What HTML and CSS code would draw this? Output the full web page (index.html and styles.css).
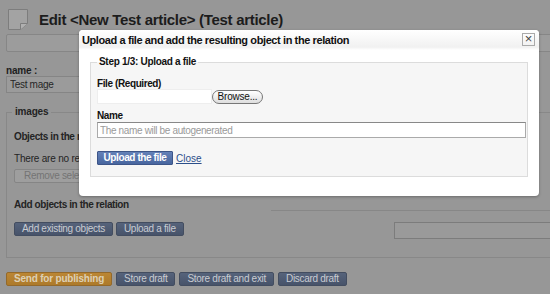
FILE: index.html
```html
<!DOCTYPE html>
<html lang="en">
<head>
  <meta charset="UTF-8" />
  <title>Edit article</title>
  <link rel="stylesheet" href="styles.css">
</head>
<body>
  <div class="page">
    <div class="head">
      <svg class="doc-icon" width="22" height="23" viewBox="0 0 22 23">
        <path d="M1.5 1.5 H20.5 V15.5 L13.5 21.5 H1.5 Z" fill="#a3a3a3" stroke="#7d7d7d" />
        <path d="M20.5 15.5 H13.5 V21.5" fill="#b0b0b0" stroke="#7d7d7d" />
      </svg>
      <h1>Edit &lt;New Test article&gt; (Test article)</h1>
    </div>

    <div class="toolbar"></div>

    <label class="field-label">name :</label>
    <input class="text-input" type="text" value="Test mage" />

    <fieldset class="relation">
      <legend>images</legend>
      <h3>Objects in the relation</h3>
      <p>There are no related objects.</p>
      <button class="btn btn-off">Remove selected</button>
      <h3 class="add-title">Add objects in the relation</h3>
      <div class="add-row">
        <button class="btn btn-blue">Add existing objects</button>
        <button class="btn btn-blue">Upload a file</button>
        <div class="search-block">
          <input class="search-input" type="text" />
        </div>
      </div>
    </fieldset>

    <div class="actions">
      <button class="btn btn-orange">Send for publishing</button>
      <button class="btn btn-blue">Store draft</button>
      <button class="btn btn-blue">Store draft and exit</button>
      <button class="btn btn-blue">Discard draft</button>
    </div>
  </div>

  <!-- fenêtre modale -->
  <div class="dialog">
    <div class="dialog-title">
      <span>Upload a file and add the resulting object in the relation</span>
      <span class="dialog-close">&#215;</span>
    </div>
    <fieldset class="step">
      <legend>Step 1/3: Upload a file</legend>
      <label class="step-label">File (Required)</label>
      <div class="file-row">
        <span class="file-box"></span>
        <button class="browse">Browse...</button>
      </div>
      <label class="step-label name-label">Name</label>
      <input class="name-input" type="text" placeholder="The name will be autogenerated" />
      <div class="step-actions">
        <button class="upload-btn">Upload the file</button>
        <a href="#" class="close-link">Close</a>
      </div>
    </fieldset>
  </div>
</body>
</html>
```

FILE: styles.css
```css
* {
  margin: 0; padding: 0; box-sizing: border-box;
}

html, body {
  width: 550px;
  height: 294px;
  overflow: hidden;
  background: #979797;
  font-family: "Liberation Sans", Arial, sans-serif;
  color: #1e1e1e;
}

.page {
  position: relative;
  width: 620px;
  padding: 8px 6px 0;
}

.head {
  display: flex;
  align-items: center;
  gap: 10px;
  height: 23px;
}

.doc-icon {
  margin-left: 1px;
  flex: none;
}

h1 {
  font-size: 15px;
  letter-spacing: -0.3px;
  font-weight: bold;
  color: #1c1c1c;
}

.toolbar {
  height: 18px;
  margin-top: 3px;
  border: 1px solid #868686;
  border-radius: 2px;
  background: #9c9c9c;
}

.field-label {
  display: block;
  margin-top: 13px;
  font-size: 10px;
  letter-spacing: -0.2px;
  font-weight: bold;
  line-height: 11px;
}

.text-input {
  display: block;
  width: 320px;
  height: 17px;
  padding: 0 3px;
  border: 1px solid #858585;
  background: #9b9b9b;
  font: 10px "Liberation Sans", Arial, sans-serif;
  letter-spacing: -0.3px;
  color: #262626;
}

.relation {
  margin-top: 13px;
  height: 152px;
  padding: 0 7px;
  border: 1px solid #888;
}

.relation legend {
  margin-left: -2px;
  padding: 0 3px;
  font-size: 10px;
  line-height: 12px;
  letter-spacing: -0.2px;
  font-weight: bold;
  color: #232323;
}

.relation h3 {
  margin-top: 13px;
  font-size: 10px;
  line-height: 12px;
  letter-spacing: -0.4px;
  font-weight: bold;
  color: #242424;
}

.relation p {
  margin-top: 10px;
  font-size: 10px;
  line-height: 12px;
  letter-spacing: -0.2px;
  color: #242424;
}

.relation h3.add-title {
  margin-top: 16px;
}

.btn {
  height: 14px;
  padding: 0 7px;
  border: 1px solid #6e6e6e;
  border-radius: 2px;
  font: 10px "Liberation Sans", Arial, sans-serif;
  line-height: 12px;
  letter-spacing: -0.3px;
  white-space: nowrap;
  flex: none;
  cursor: pointer;
}

.btn-off {
  display: block;
  margin-top: 4px;
  width: 140px;
  text-align: left;
  padding-left: 9px;
  background: #9e9e9e;
  border-color: #858585;
  color: #747474;
}

.btn-blue {
  background: linear-gradient(#56637b, #47536a);
  border-color: #434d60;
  color: #c9ccd2;
}

.btn-orange {
  background: linear-gradient(#bb8634, #ad7a2a);
  border-color: #94692a;
  color: #ddd0b6;
  font-weight: bold;
  letter-spacing: -0.2px;
}

.add-row {
  display: flex;
  align-items: flex-start;
  gap: 3px;
  margin-top: 11px;
}

.search-block {
  flex: none;
  width: 360px;
  margin-left: 84px;
  margin-top: -12px;
  padding: 11px 0 0 123px;
  border-top: 1px solid #878787;
}

.search-input {
  display: block;
  width: 240px;
  height: 17px;
  border: 1px solid #7c7c7c;
  background: #9a9a9a;
}

.actions {
  display: flex;
  gap: 4px;
  margin-top: 14px;
}

.dialog {
  position: absolute;
  left: 79px;
  top: 30px;
  width: 460px;
  height: 166px;
  background: #fff;
  border-radius: 4px;
  box-shadow: 0 1px 3px rgba(0, 0, 0, 0.3);
}

.dialog-title {
  display: flex;
  justify-content: space-between;
  align-items: center;
  height: 20px;
  padding: 0 4px 0 3px;
  border-radius: 4px 4px 0 0;
  background: linear-gradient(#fff, #f1f1f1 85%, #fff);
  font-size: 11px;
  letter-spacing: -0.4px;
  font-weight: bold;
  color: #111;
}

.dialog-close {
  width: 13px;
  height: 13px;
  margin-top: -2px;
  border: 1px solid #aaa;
  font-size: 13px;
  line-height: 10px;
  font-weight: normal;
  letter-spacing: 0;
  text-align: center;
  color: #444;
}

.step {
  margin: 6px 11px 0;
  height: 121px;
  padding: 0 0 0 6px;
  border: 1px solid #dcdcdc;
  background: #f6f6f6;
}

.step legend {
  margin-left: 0;
  padding: 0 2px;
  font-size: 10px;
  line-height: 12px;
  letter-spacing: -0.3px;
  font-weight: bold;
  color: #111;
}

.step-label {
  display: block;
  margin-top: 10px;
  font-size: 10px;
  font-weight: bold;
  line-height: 11px;
  letter-spacing: -0.4px;
  color: #111;
}

.file-row {
  display: flex;
  align-items: center;
  gap: 0;
}

.file-box {
  width: 115px;
  height: 15px;
  background: #fff;
  border: 1px solid #eee;
}

.browse {
  width: 51px;
  height: 14px;
  border: 1px solid #777;
  border-radius: 7px;
  background: linear-gradient(#fff, #dedede);
  font: 10px "Liberation Sans", Arial, sans-serif;
  line-height: 12px;
  letter-spacing: -0.2px;
  color: #111;
}

.name-label {
  margin-top: 6px;
}

.name-input {
  display: block;
  margin-top: 1px;
  width: 429px;
  height: 16px;
  padding: 0 2px;
  border: 1px solid #aaa;
  border-top-color: #888;
  background: #fff;
  font: 10px "Liberation Sans", Arial, sans-serif;
  letter-spacing: -0.35px;
}

.name-input::placeholder {
  color: #9a9a9a;
}

.step-actions {
  display: flex;
  align-items: center;
  gap: 3px;
  margin-top: 13px;
}

.upload-btn {
  width: 76px;
  height: 14px;
  border: 1px solid #3d5588;
  border-radius: 1px;
  background: linear-gradient(#6481b8, #48669f);
  font: bold 10px "Liberation Sans", Arial, sans-serif;
  line-height: 12px;
  letter-spacing: -0.4px;
  color: #fff;
}

.close-link {
  font-size: 10px;
  color: #2c4f8a;
}
```
